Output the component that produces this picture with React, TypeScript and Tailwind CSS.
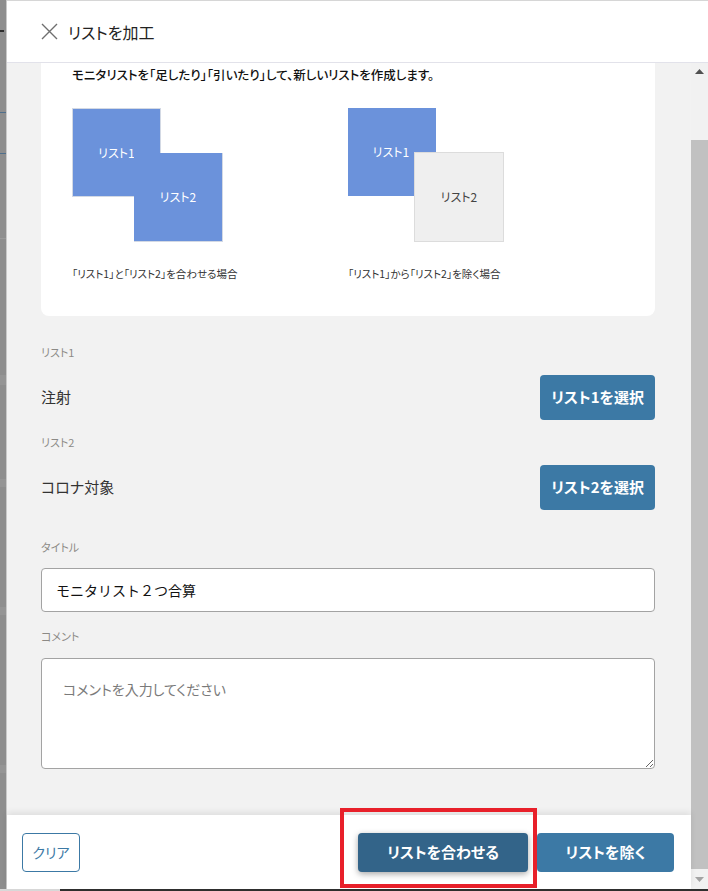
import React from "react";

const BLUE = "bg-[#3c79a5]";

function CloseIcon() {
  return (
    <svg width="17" height="17" viewBox="0 0 17 17" className="shrink-0">
      <path d="M1 1 L16 16 M16 1 L1 16" stroke="#6f6f6f" strokeWidth="1.4" fill="none" />
    </svg>
  );
}

// dimmed page behind the dialog (only a sliver shows)
function BackdropStrip() {
  return (
    <div className="w-[6px] h-full bg-[#8e8e8e] flex flex-col shrink-0">
      <div className="h-[30px]" />
      <div className="h-[2px] w-[4px] bg-[#2e2e2e]" />
      <div className="h-[80px]" />
      <div className="h-[1px] bg-[#4f6f8c]" />
      <div className="h-[40px]" />
      <div className="h-[1px] bg-[#4f6f8c]" />
      <div className="h-[84px]" />
      <div className="h-[1px] bg-[#9a9a9a]" />
      <div className="h-[136px]" />
      <div className="h-[10px] bg-[#959595]" />
      <div className="h-[94px]" />
      <div className="h-[8px] bg-[#959595]" />
      <div className="h-[120px]" />
      <div className="h-[8px] bg-[#959595]" />
      <div className="h-[150px]" />
      <div className="h-[8px] bg-[#959595]" />
    </div>
  );
}

function Venn({ mode }: { mode: "add" | "sub" }) {
  const add = mode === "add";
  return (
    <div className="relative h-[134px] w-[160px]">
      <div
        className={
          add
            ? "absolute left-0 top-0 w-[89px] h-[89px] bg-[#6b92db] border border-[#d3d9e4] flex items-center justify-center text-white text-[12px]"
            : "absolute left-0 top-0 w-[88px] h-[88px] bg-[#6b92db] flex items-center justify-center text-white text-[12px]"
        }
      >
        <span className={add ? "" : "-translate-x-[1px]"}>リスト1</span>
      </div>
      {add ? (
        <div className="absolute left-[62px] top-[45px] w-[89px] h-[89px] bg-[#6b92db] border border-[#d3d9e4] border-t-0 border-l-0 flex items-center justify-center text-white text-[12px]">
          リスト2
        </div>
      ) : (
        <div className="absolute left-[66px] top-[44px] w-[90px] h-[90px] bg-[#efefef] border border-[#dcdcdc] flex items-center justify-center text-[#444] text-[12px]">
          リスト2
        </div>
      )}
    </div>
  );
}

function FieldLabel({ children, className = "" }: { children: React.ReactNode; className?: string }) {
  return <div className={"text-[11px] leading-[16px] text-[#8c8a86] " + className}>{children}</div>;
}

function ListRow({ value, button, className = "" }: { value: string; button: string; className?: string }) {
  return (
    <div className={"flex items-center justify-between h-[45px] " + className}>
      <span className="text-[15px] text-[#333]">{value}</span>
      <button className={`${BLUE} w-[115px] h-[45px] rounded-[4px] text-white text-[15px] font-bold`}>
        {button}
      </button>
    </div>
  );
}

function Scrollbar() {
  return (
    <div className="w-[17px] h-full bg-[#f1f1f1] flex flex-col items-stretch shrink-0">
      <div className="h-[17px] flex items-center justify-center">
        <svg width="9" height="5" viewBox="0 0 9 5">
          <path d="M0 5 L4.5 0 L9 5 Z" fill="#505050" />
        </svg>
      </div>
      <div className="h-[60px]" />
      <div className="flex-1 bg-[#c1c1c1]" />
      <div className="h-[20px] flex items-center justify-center">
        <svg width="9" height="5" viewBox="0 0 9 5">
          <path d="M0 0 L4.5 5 L9 0 Z" fill="#a3a3a3" />
        </svg>
      </div>
    </div>
  );
}

export default function App() {
  return (
    <div className="relative w-[708px] h-[891px] overflow-hidden flex flex-col bg-[#8e8e8e] font-['Noto_Sans_CJK_JP','Noto_Sans',sans-serif] [font-feature-settings:'palt']">
      <div className="flex h-[889px]">
        <BackdropStrip />
        <div className="w-[1px] bg-[#c9c9c9]" />
        <div className="flex-1 flex flex-col bg-white min-w-0">
          {/* header */}
          <div className="h-[63px] shrink-0 border-t border-b border-t-[#d6d6d6] border-b-[#e2e2ea] flex items-center pl-[34px] gap-[10px]">
            <CloseIcon />
            <span className="text-[16px] text-[#222] leading-none">リストを加工</span>
          </div>

          <div className="flex flex-1 min-h-0">
            <div className="flex-1 flex flex-col min-w-0">
              {/* scroll area */}
              <div className="flex-1 bg-[#f2f2f2] pl-[34px] pr-[36px] overflow-hidden">
                <div className="bg-white rounded-b-[8px] pl-[31px] pt-[2px] pb-[34px]">
                  <p className="text-[12.5px] leading-[20px] font-medium text-[#111]">
                    モニタリストを「足したり」「引いたり」して、新しいリストを作成します。
                  </p>
                  <div className="flex mt-[23px]">
                    <div className="w-[276px]">
                      <Venn mode="add" />
                      <p className="mt-[24px] text-[10.5px] leading-[16px] text-[#333]">
                        「リスト1」と「リスト2」を合わせる場合
                      </p>
                    </div>
                    <div>
                      <Venn mode="sub" />
                      <p className="mt-[24px] text-[10.5px] leading-[16px] text-[#333]">
                        「リスト1」から「リスト2」を除く場合
                      </p>
                    </div>
                  </div>
                </div>

                <FieldLabel className="mt-[28px]">リスト1</FieldLabel>
                <ListRow className="mt-[15px]" value="注射" button="リスト1を選択" />
                <FieldLabel className="mt-[14px]">リスト2</FieldLabel>
                <ListRow className="mt-[15px]" value="コロナ対象" button="リスト2を選択" />

                <FieldLabel className="mt-[29px]">タイトル</FieldLabel>
                <input
                  readOnly
                  value="モニタリスト２つ合算"
                  className="mt-[13px] block w-full h-[44px] bg-white border border-[#a3a3a3] rounded-[4px] px-[14px] text-[14px] text-[#111] outline-none [font-feature-settings:normal]"
                />

                <FieldLabel className="mt-[16px]">コメント</FieldLabel>
                <textarea
                  placeholder="コメントを入力してください"
                  className="mt-[14px] block w-full h-[111px] bg-white border border-[#a3a3a3] rounded-[4px] px-[21px] py-[20px] text-[14px] text-[#333] placeholder:text-[#7a7a7a] outline-none"
                />
              </div>

              {/* footer */}
              <div className="relative z-10 h-[74px] shrink-0 bg-white shadow-[0_-3px_6px_rgba(0,0,0,0.08)] flex items-start justify-between pt-[18px] pl-[15px] pr-[17px]">
                <button className="w-[58px] h-[39px] border border-[#3c79a5] rounded-[4px] text-[#3c79a5] text-[14px]">
                  クリア
                </button>
                <div className="flex gap-[9px]">
                  <button className="w-[170px] h-[39px] rounded-[4px] bg-[#336489] text-white text-[15px] font-bold shadow-[0_2px_6px_rgba(0,0,0,0.35)]">
                    リストを合わせる
                  </button>
                  <button className={`${BLUE} w-[137px] h-[39px] rounded-[4px] text-white text-[15px] font-bold`}>
                    リストを除く
                  </button>
                </div>
              </div>
            </div>
            <Scrollbar />
          </div>
        </div>
      </div>
      <div className="h-[2px] flex">
        <div className="w-[60px] bg-[#d9d9d9]" />
        <div className="flex-1 bg-[#2f2f2f]" />
      </div>

      {/* highlight annotation */}
      <div className="absolute z-20 left-[340px] top-[808px] w-[197px] h-[80px] border-[4px] border-[#e8202a] pointer-events-none" />
    </div>
  );
}
